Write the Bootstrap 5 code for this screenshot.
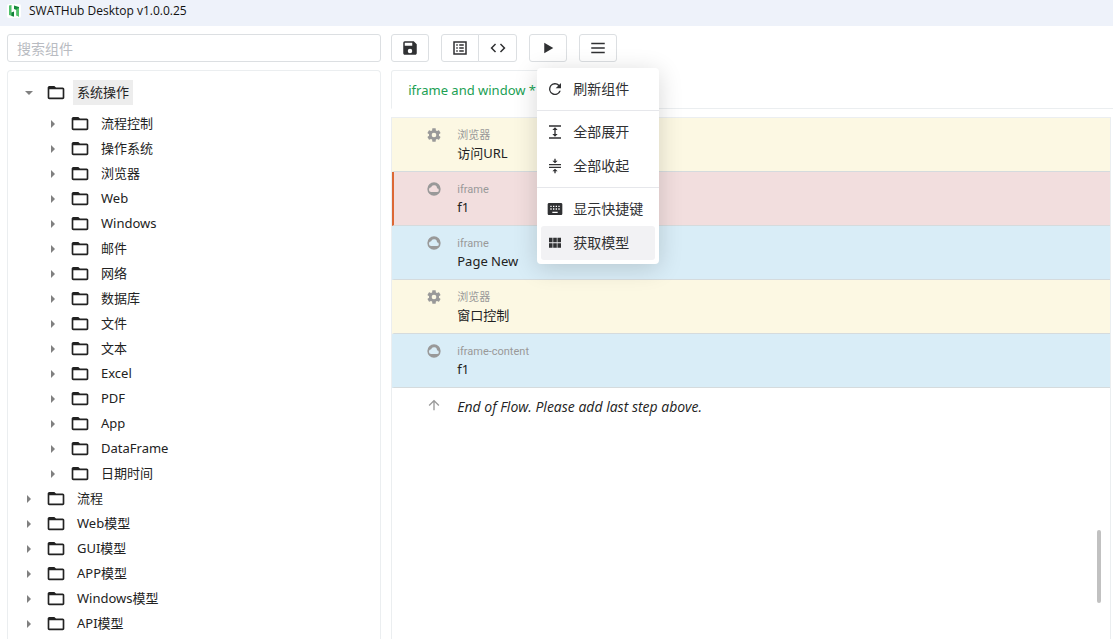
<!DOCTYPE html>
<html lang="zh-CN">
<head>
<meta charset="utf-8">
<meta name="viewport" content="width=device-width, initial-scale=1">
<title>SWATHub Desktop</title>
<link href="https://cdn.jsdelivr.net/npm/bootstrap@5.3.0/dist/css/bootstrap.min.css" rel="stylesheet">
<style>
  :root { --line: #ebeef0; --ink: #303133; --green: #20a053; }
  body { font-family: "Noto Sans", "Noto Sans CJK SC", sans-serif; font-size: 13px; line-height: 18px; color: #222; background: #fff; }
  .titlebar { height: 26px; padding: 0 7px 4px; background: #eef2fa; font-family: "Open Sans", "Noto Sans", sans-serif; font-size: 12px; color: #111; }
  .titlebar span { font-size: 12px; }
  .workspace { display: grid; grid-template-columns: 13fr 25fr; grid-template-rows: auto minmax(0, 1fr); gap: 8px 10px; padding: 8px 2px 0 7px; min-height: 0; }
  .search-box { height: 28px; padding: 0 9px; font-size: 14px; border-color: #dcdfe2; border-radius: 3px; }
  .search-box::placeholder { color: #b9bcc2; }
  .toolbar-row { gap: 12px; }
  .tool { --bs-btn-padding-x: 0; --bs-btn-padding-y: 0; --bs-btn-border-color: #dcdfe2; --bs-btn-color: var(--ink); --bs-btn-border-radius: 3px; --bs-btn-bg: #fff; --bs-btn-hover-bg: #f3f4f6; --bs-btn-hover-border-color: #dcdfe2; width: 38px; height: 28px; display: flex; align-items: center; justify-content: center; }
  .btn-group > .tool + .tool { width: 39px; }
  svg { display: block; fill: currentColor; flex: none; }

  .tree-panel { border: 1px solid var(--line); border-bottom: 0; border-radius: 4px 4px 0 0; padding: 9px 0 0 14px; overflow: hidden; }
  .tree-panel ul { list-style: none; margin: 0; padding: 0; }
  .tree-panel ul ul { padding: 6px 0 0 24px; }
  .node { display: flex; align-items: center; height: 25px; }
  .twig { width: 13px; height: 13px; padding: 0; border: 0; background: none; display: flex; align-items: center; justify-content: center; }
  .twig::before { content: ""; border: 4px solid transparent; border-left: 4px solid #808080; border-right: 0; }
  .twig[aria-expanded="true"]::before { border: 4px solid transparent; border-top: 4px solid #808080; border-bottom: 0; }
  .node svg { margin-left: 11px; width: 20px; height: 20px; color: #222; }
  .node a { margin-left: 7px; padding: 0 4px; line-height: 25px; color: #222; text-decoration: none; }
  .node a.active { background: #ededed; }

  .flow-pane { min-height: 0; }
  .flow-tabs { --bs-nav-tabs-border-color: var(--line); --bs-nav-tabs-link-active-border-color: var(--line) var(--line) #fff; --bs-nav-tabs-link-active-color: var(--green); --bs-nav-tabs-border-radius: 3px; margin-right: -2px; }
  .flow-tabs .nav-link { padding: 10px 16px 9px; font-size: 13px; }
  .flow { border: 1px solid var(--line); border-bottom: 0; margin-top: 8px; position: relative; overflow: hidden; }
  .step { display: flex; height: 54px; border-bottom: 1px solid #d5dbdd; border-left: 2px solid transparent; padding: 9px 0 0 32px; }
  .step svg { width: 16px; height: 16px; margin-right: 15px; color: #999; }
  .step small { display: block; font: 11px/18px Roboto, "Noto Sans CJK SC", sans-serif; color: #999; }
  .step div { line-height: 16px; }
  .browser-step { background-color: #fcf8e3; }
  .error-step { background-color: #f2dede; border-left-color: #dc6835; }
  .frame-step { background-color: #d9edf7; }
  .end-step { border-bottom: 0; }
  .end-step em { font-family: "Open Sans", "Noto Sans", sans-serif; font-size: 14px; line-height: 20px; }
  .thumb { position: absolute; right: 9px; top: 79%; bottom: 7%; width: 4px; border-radius: 2px; background: #c1c1c1; }

  .flow-menu { --bs-dropdown-min-width: 122px; --bs-dropdown-padding-x: 4px; --bs-dropdown-padding-y: 4px; --bs-dropdown-font-size: 14px; --bs-dropdown-border-width: 0; --bs-dropdown-border-radius: 4px; --bs-dropdown-divider-margin-y: 4px; --bs-dropdown-divider-bg: #e6e7eb; --bs-dropdown-item-padding-x: 6px; --bs-dropdown-item-padding-y: 0; --bs-dropdown-link-active-bg: #f2f2f4; --bs-dropdown-link-color: var(--ink); --bs-dropdown-link-active-color: var(--ink); padding: 4px; top: calc(100% + 6px); left: 50%; transform: translateX(-50%); box-shadow: 0 4px 24px rgba(0,0,0,.16); }
  .flow-menu .dropdown-item { display: flex; align-items: center; gap: 10px; height: 34px; border-radius: 3px; }
  .flow-menu .dropdown-divider { margin-left: -4px; margin-right: -4px; opacity: 1; }
  .flow-menu svg { width: 16px; height: 16px; }
</style>
</head>
<body class="vh-100 overflow-hidden d-flex flex-column">
<svg class="d-none" aria-hidden="true">
  <symbol id="folder" viewBox="0 0 24 24"><path d="M20 5.500h-8l-2-2H4c-1.100 0-2 .9-2 2v12c0 1.100.9 2 2 2h16c1.100 0 2-.9 2-2v-10c0-1.100-.9-2-2-2zm0 12H4v-10h16z"/></symbol>
  <symbol id="gear" viewBox="0 0 24 24"><path d="M19.430 12.980c.04-.32.07-.64.07-.98s-.03-.66-.07-.98l2.110-1.650c.19-.15.24-.42.12-.64l-2-3.460c-.12-.22-.39-.3-.61-.22l-2.490 1c-.52-.4-1.080-.73-1.690-.98l-.38-2.650C14.460 2.180 14.250 2 14 2h-4c-.25 0-.46.18-.49.42l-.38 2.650c-.61.25-1.170.59-1.690.98l-2.490-1c-.23-.09-.49 0-.61.22l-2 3.460c-.13.22-.07.49.12.64l2.110 1.650c-.04.32-.07.65-.07.98s.03.66.07.98l-2.110 1.650c-.19.15-.24.42-.12.64l2 3.460c.12.22.39.3.61.22l2.490-1c.52.4 1.080.73 1.690.98l.38 2.650c.03.24.24.42.49.42h4c.25 0 .46-.18.49-.42l.38-2.650c.61-.25 1.170-.59 1.690-.98l2.490 1c.23.09.49 0 .61-.22l2-3.460c.12-.22.07-.49-.12-.64zM12 15.500a3.500 3.500 0 1 1 0-7 3.500 3.500 0 0 1 0 7z"/></symbol>
  <symbol id="cloud" viewBox="0 0 24 24"><path d="M12 2a10 10 0 1 0 0 20 10 10 0 0 0 0-20zm4.500 14.500H8a3.500 3.500 0 0 1-.3-7 4.500 4.500 0 0 1 8.800 1.500 2.750 2.750 0 0 1 0 5.500z"/></symbol>
</svg>

<header class="titlebar d-flex align-items-center gap-2">
  <svg width="14" height="14" viewBox="0 0 14 14" aria-hidden="true"><rect width="14" height="14" rx="2" fill="#fff"/><path d="M2 1.500 4.500 1v7.500L7 9v3.500L2 11z" fill="#4fc06a"/><path d="M4.500 8.500 7 7.500v5L4.500 12z" fill="#13803a"/><path d="M7 1.500 12 3v9.500l-2.500-1V6L7 5z" fill="#178c3c"/><path d="M9.500 5 12 4v8.500l-2.500-1z" fill="#55c46b"/></svg>
  <span>SWATHub Desktop v1.0.0.25</span>
</header>

<main class="workspace flex-grow-1">
  <input type="search" class="form-control search-box" placeholder="搜索组件" aria-label="搜索组件">

  <div class="d-flex toolbar-row" role="toolbar" aria-label="流程工具">
    <button type="button" class="btn tool" aria-label="保存"><svg width="18" height="18" viewBox="0 0 24 24"><path d="M17 3H5a2 2 0 0 0-2 2v14c0 1.100.9 2 2 2h14c1.100 0 2-.9 2-2V7zm-5 16a3 3 0 1 1 0-6 3 3 0 0 1 0 6zm3-10H5V5h10z"/></svg></button>
    <div class="btn-group">
      <button type="button" class="btn tool" aria-label="列表"><svg width="18" height="18" viewBox="0 0 24 24"><path fill-rule="evenodd" d="M3 3h18v18H3zm2 2v14h14V5zM7 7h2v2H7zm4 0h6v2h-6zM7 11h2v2H7zm4 0h6v2h-6zM7 15h2v2H7zm4 0h6v2h-6z"/></svg></button>
      <button type="button" class="btn tool" aria-label="代码"><svg width="18" height="18" viewBox="0 0 24 24"><path d="M9.400 16.600 4.800 12l4.600-4.600L8 6l-6 6 6 6zm5.200 0 4.600-4.600-4.600-4.600L16 6l6 6-6 6z"/></svg></button>
    </div>
    <button type="button" class="btn tool" aria-label="运行"><svg width="18" height="18" viewBox="0 0 24 24"><path d="M7 5v14l12-7z"/></svg></button>
    <div class="dropdown">
      <button type="button" class="btn tool" data-bs-toggle="dropdown" data-bs-display="static" aria-expanded="true" aria-label="菜单"><svg width="18" height="18" viewBox="0 0 24 24"><path d="M3 5h18v2H3zm0 6h18v2H3zm0 6h18v2H3z"/></svg></button>
      <div class="dropdown-menu flow-menu show">
        <button type="button" class="dropdown-item"><svg viewBox="0 0 24 24"><path d="M18.400 5.600A9 9 0 1 0 20.700 14.500h-2.300A6.900 6.900 0 1 1 12 5.100c1.900 0 3.600.8 4.800 2L13 11h8V3z"/></svg>刷新组件</button>
        <hr class="dropdown-divider">
        <button type="button" class="dropdown-item"><svg viewBox="0 0 24 24"><path d="M3 2h18v2H3zm0 18h18v2H3zM12 5l4 4h-3v6h3l-4 4-4-4h3V9H8z"/></svg>全部展开</button>
        <button type="button" class="dropdown-item"><svg viewBox="0 0 24 24"><path d="M3 9h18v2H3zm0 4h18v2H3zM11 1h2v3h3l-4 4-4-4h3zm1 15 4 4h-3v3h-2v-3H8z"/></svg>全部收起</button>
        <hr class="dropdown-divider">
        <button type="button" class="dropdown-item"><svg viewBox="0 0 24 24"><path fill-rule="evenodd" d="M3 3h18c1 0 2 1 2 2v14c0 1-1 2-2 2H3c-1 0-2-1-2-2V5c0-1 1-2 2-2zm2 4v2h2V7zm4 0v2h2V7zm4 0v2h2V7zm4 0v2h2V7zM5 11v2h2v-2zm4 0v2h2v-2zm4 0v2h2v-2zm4 0v2h2v-2zM8 16v2h8v-2z"/></svg>显示快捷键</button>
        <button type="button" class="dropdown-item active"><svg viewBox="0 0 24 24"><path d="M3 4h5.300v7H3zm6.300 0h5.400v7H9.300zm6.400 0H21v7h-5.300zM3 12.200h5.300v7H3zm6.300 0h5.400v7H9.300zm6.400 0H21v7h-5.300z"/></svg>获取模型</button>
      </div>
    </div>
  </div>

  <nav class="tree-panel" aria-label="组件">
    <ul>
      <li><div class="node"><button class="twig" aria-expanded="true" aria-label="收起"></button><svg><use href="#folder"/></svg><a href="#" class="active">系统操作</a></div>
        <ul>
          <li class="node"><button class="twig" aria-label="展开"></button><svg><use href="#folder"/></svg><a href="#">流程控制</a></li>
          <li class="node"><button class="twig" aria-label="展开"></button><svg><use href="#folder"/></svg><a href="#">操作系统</a></li>
          <li class="node"><button class="twig" aria-label="展开"></button><svg><use href="#folder"/></svg><a href="#">浏览器</a></li>
          <li class="node"><button class="twig" aria-label="展开"></button><svg><use href="#folder"/></svg><a href="#">Web</a></li>
          <li class="node"><button class="twig" aria-label="展开"></button><svg><use href="#folder"/></svg><a href="#">Windows</a></li>
          <li class="node"><button class="twig" aria-label="展开"></button><svg><use href="#folder"/></svg><a href="#">邮件</a></li>
          <li class="node"><button class="twig" aria-label="展开"></button><svg><use href="#folder"/></svg><a href="#">网络</a></li>
          <li class="node"><button class="twig" aria-label="展开"></button><svg><use href="#folder"/></svg><a href="#">数据库</a></li>
          <li class="node"><button class="twig" aria-label="展开"></button><svg><use href="#folder"/></svg><a href="#">文件</a></li>
          <li class="node"><button class="twig" aria-label="展开"></button><svg><use href="#folder"/></svg><a href="#">文本</a></li>
          <li class="node"><button class="twig" aria-label="展开"></button><svg><use href="#folder"/></svg><a href="#">Excel</a></li>
          <li class="node"><button class="twig" aria-label="展开"></button><svg><use href="#folder"/></svg><a href="#">PDF</a></li>
          <li class="node"><button class="twig" aria-label="展开"></button><svg><use href="#folder"/></svg><a href="#">App</a></li>
          <li class="node"><button class="twig" aria-label="展开"></button><svg><use href="#folder"/></svg><a href="#">DataFrame</a></li>
          <li class="node"><button class="twig" aria-label="展开"></button><svg><use href="#folder"/></svg><a href="#">日期时间</a></li>
        </ul>
      </li>
      <li class="node"><button class="twig" aria-label="展开"></button><svg><use href="#folder"/></svg><a href="#">流程</a></li>
      <li class="node"><button class="twig" aria-label="展开"></button><svg><use href="#folder"/></svg><a href="#">Web模型</a></li>
      <li class="node"><button class="twig" aria-label="展开"></button><svg><use href="#folder"/></svg><a href="#">GUI模型</a></li>
      <li class="node"><button class="twig" aria-label="展开"></button><svg><use href="#folder"/></svg><a href="#">APP模型</a></li>
      <li class="node"><button class="twig" aria-label="展开"></button><svg><use href="#folder"/></svg><a href="#">Windows模型</a></li>
      <li class="node"><button class="twig" aria-label="展开"></button><svg><use href="#folder"/></svg><a href="#">API模型</a></li>
    </ul>
  </nav>

  <section class="flow-pane d-flex flex-column">
    <ul class="nav nav-tabs flow-tabs">
      <li class="nav-item"><a class="nav-link active" href="#">iframe and window *</a></li>
    </ul>
    <div class="flow flex-grow-1">
      <div class="step browser-step"><svg><use href="#gear"/></svg><div><small>浏览器</small>访问URL</div></div>
      <div class="step error-step"><svg><use href="#cloud"/></svg><div><small>iframe</small>f1</div></div>
      <div class="step frame-step"><svg><use href="#cloud"/></svg><div><small>iframe</small>Page New</div></div>
      <div class="step browser-step"><svg><use href="#gear"/></svg><div><small>浏览器</small>窗口控制</div></div>
      <div class="step frame-step"><svg><use href="#cloud"/></svg><div><small>iframe-content</small>f1</div></div>
      <div class="step end-step"><svg viewBox="0 0 24 24"><path d="m4 12 1.400 1.400L11 7.800V20h2V7.800l5.600 5.600L20 12l-8-8z"/></svg><em>End of Flow. Please add last step above.</em></div>
      <div class="thumb"></div>
    </div>
  </section>
</main>
<script src="https://cdn.jsdelivr.net/npm/bootstrap@5.3.0/dist/js/bootstrap.bundle.min.js"></script>
</body>
</html>
